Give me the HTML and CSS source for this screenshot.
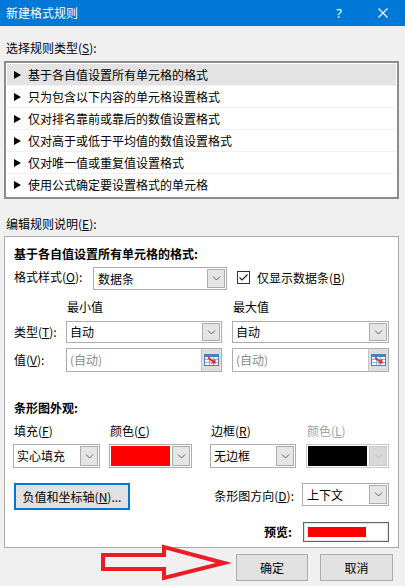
FILE: index.html
```html
<!DOCTYPE html>
<html lang="zh-CN">
<head>
<meta charset="utf-8">
<title>新建格式规则</title>
<link rel="stylesheet" href="styles.css">
</head>
<body>
<div class="dialog">
  <div class="titlebar">
    <span class="title">新建格式规则</span>
    <span class="help">?</span>
    <svg class="close" width="10" height="10" viewBox="0 0 10 10"><path d="M0.5 0.5 L9.5 9.5 M9.5 0.5 L0.5 9.5" stroke="#fff" stroke-width="1.1" fill="none"/></svg>
  </div>
  <div class="content">
    <div class="lbl lbl-type">选择规则类型(<u>S</u>):</div>
    <div class="listbox">
      <div class="row sel"><svg class="tri" width="7" height="8" viewBox="0 0 7 8"><polygon points="0,0 7,4 0,8" fill="#000"/></svg>基于各自值设置所有单元格的格式</div>
      <div class="row"><svg class="tri" width="7" height="8" viewBox="0 0 7 8"><polygon points="0,0 7,4 0,8" fill="#000"/></svg>只为包含以下内容的单元格设置格式</div>
      <div class="row"><svg class="tri" width="7" height="8" viewBox="0 0 7 8"><polygon points="0,0 7,4 0,8" fill="#000"/></svg>仅对排名靠前或靠后的数值设置格式</div>
      <div class="row"><svg class="tri" width="7" height="8" viewBox="0 0 7 8"><polygon points="0,0 7,4 0,8" fill="#000"/></svg>仅对高于或低于平均值的数值设置格式</div>
      <div class="row"><svg class="tri" width="7" height="8" viewBox="0 0 7 8"><polygon points="0,0 7,4 0,8" fill="#000"/></svg>仅对唯一值或重复值设置格式</div>
      <div class="row last"><svg class="tri" width="7" height="8" viewBox="0 0 7 8"><polygon points="0,0 7,4 0,8" fill="#000"/></svg>使用公式确定要设置格式的单元格</div>
    </div>
    <div class="lbl lbl-edit">编辑规则说明(<u>E</u>):</div>
    <div class="panel">
      <div class="bold heading">基于各自值设置所有单元格的格式:</div>
      <div class="fmt-row">
        <span class="fmt-label">格式样式(<u>O</u>):</span>
        <div class="combo fmt">
          <span class="v">数据条</span>
          <span class="dd"><svg width="9" height="5" viewBox="0 0 9 5"><polyline points="1,0.5 4.5,4 8,0.5" fill="none" stroke="#606060" stroke-width="1"/></svg></span>
        </div>
        <span class="checkbox"><svg width="11" height="11" viewBox="0 0 11 11"><polyline points="1.5,5.5 4,8 9.5,2.5" fill="none" stroke="#222" stroke-width="1.2"/></svg></span>
        <span class="check-label">仅显示数据条(<u>B</u>)</span>
      </div>
      <div class="grid3 mm-row">
        <span></span>
        <span class="mm">最小值</span>
        <span class="mm">最大值</span>
      </div>
      <div class="grid3 type-row">
        <span class="rlabel">类型(<u>T</u>):</span>
        <div class="combo w156">
          <span class="v">自动</span>
          <span class="dd"><svg width="9" height="5" viewBox="0 0 9 5"><polyline points="1,0.5 4.5,4 8,0.5" fill="none" stroke="#606060" stroke-width="1"/></svg></span>
        </div>
        <div class="combo w157">
          <span class="v">自动</span>
          <span class="dd"><svg width="9" height="5" viewBox="0 0 9 5"><polyline points="1,0.5 4.5,4 8,0.5" fill="none" stroke="#606060" stroke-width="1"/></svg></span>
        </div>
      </div>
      <div class="grid3 val-row">
        <span class="rlabel">值(<u>V</u>):</span>
        <div class="input w156">
          <span class="v ph">(自动)</span>
          <span class="ref"><svg width="15" height="12" viewBox="0 0 15 12"><rect x="0.5" y="0.5" width="14" height="11" fill="#fff" stroke="#4a7fc0"/><rect x="1" y="1" width="13" height="2" fill="#4a7fc0"/><path d="M1 5.5 H14 M1 8.5 H14 M5.5 3 V11 M9.5 3 V11" stroke="#8fb2de" stroke-width="1"/><path d="M4 3.5 L9 7.5" stroke="#e0302a" stroke-width="2"/><polygon points="7,9.5 12,9.5 11,4.5" fill="#e0302a"/></svg></span>
        </div>
        <div class="input w157">
          <span class="v ph">(自动)</span>
          <span class="ref"><svg width="15" height="12" viewBox="0 0 15 12"><rect x="0.5" y="0.5" width="14" height="11" fill="#fff" stroke="#4a7fc0"/><rect x="1" y="1" width="13" height="2" fill="#4a7fc0"/><path d="M1 5.5 H14 M1 8.5 H14 M5.5 3 V11 M9.5 3 V11" stroke="#8fb2de" stroke-width="1"/><path d="M4 3.5 L9 7.5" stroke="#e0302a" stroke-width="2"/><polygon points="7,9.5 12,9.5 11,4.5" fill="#e0302a"/></svg></span>
        </div>
      </div>
      <div class="bold appear-head">条形图外观:</div>
      <div class="grid4 ap-labels">
        <span>填充(<u>F</u>)</span>
        <span>颜色(<u>C</u>)</span>
        <span>边框(<u>R</u>)</span>
        <span class="disabled">颜色(<u>L</u>)</span>
      </div>
      <div class="grid4 ap-combos">
        <div class="combo w87">
          <span class="v">实心填充</span>
          <span class="dd"><svg width="9" height="5" viewBox="0 0 9 5"><polyline points="1,0.5 4.5,4 8,0.5" fill="none" stroke="#606060" stroke-width="1"/></svg></span>
        </div>
        <div class="combo w83">
          <span class="swatch red"></span>
          <span class="dd"><svg width="9" height="5" viewBox="0 0 9 5"><polyline points="1,0.5 4.5,4 8,0.5" fill="none" stroke="#606060" stroke-width="1"/></svg></span>
        </div>
        <div class="combo w86">
          <span class="v">无边框</span>
          <span class="dd"><svg width="9" height="5" viewBox="0 0 9 5"><polyline points="1,0.5 4.5,4 8,0.5" fill="none" stroke="#606060" stroke-width="1"/></svg></span>
        </div>
        <div class="combo w83 dis">
          <span class="swatch black"></span>
          <span class="dd"><svg width="9" height="5" viewBox="0 0 9 5"><polyline points="1,0.5 4.5,4 8,0.5" fill="none" stroke="#b5b5b5" stroke-width="1"/></svg></span>
        </div>
      </div>
      <div class="btn-row">
        <span class="btn focus">负值和坐标轴(<u>N</u>)...</span>
        <span class="dir-label">条形图方向(<u>D</u>):</span>
        <div class="combo w87 dir">
          <span class="v">上下文</span>
          <span class="dd"><svg width="9" height="5" viewBox="0 0 9 5"><polyline points="1,0.5 4.5,4 8,0.5" fill="none" stroke="#606060" stroke-width="1"/></svg></span>
        </div>
      </div>
      <div class="preview-row">
        <span class="bold">预览:</span>
        <span class="preview"><span class="bar"></span></span>
      </div>
    </div>
    <div class="actions">
      <span class="btn ok">确定</span>
      <span class="btn cancel">取消</span>
    </div>
  </div>
  <svg class="arrow" width="134" height="44" viewBox="0 0 134 44"><polygon points="5,14 66,14 66,6 126,22 66,37 66,28 5,28" fill="none" stroke="#ed1c24" stroke-width="4" stroke-linejoin="miter"/></svg>
</div>
</body>
</html>
```

FILE: styles.css
```css
body {
  margin: 0;
  font-family: "Noto Sans CJK SC", "Noto Sans", sans-serif;
  font-size: 12px;
  line-height: 16px;
  color: #000;
  background: #f0f0f0;
}
u { text-decoration: underline; text-underline-offset: 1px; }

.dialog {
  position: relative;
  width: 405px;
  height: 586px;
  overflow: hidden;
  background: #f0f0f0;
}

.titlebar {
  height: 26px;
  background: #0078d7;
  color: #fff;
  display: flex;
  align-items: center;
  padding-left: 6px;
}
.title { flex: 1; }
.help {
  font-family: "Noto Sans", sans-serif;
  font-size: 13px;
  margin-right: 36px;
}
.close { margin-right: 17px; }

.content { padding: 0 6px 0 4px; }

.lbl { padding-left: 2px; }
.lbl-type { margin-top: 14px; }
.lbl-edit { margin-top: 17px; }

.listbox {
  margin-top: 5px;
  border: 2px solid #8c8c8c;
  background: #fff;
  padding: 1px;
}
.row {
  height: 22px;
  box-sizing: border-box;
  display: flex;
  align-items: center;
  padding-left: 7px;
  border-bottom: 1px solid #f0f0f0;
}
.row.last { border-bottom: none; }
.row.sel { background: #e3e3e3; }
.tri { margin-right: 7px; }

.panel {
  margin-top: 4px;
  height: 312px;
  box-sizing: border-box;
  border: 1px solid #a9a9a9;
  background: #fff;
  padding: 9px 9px 0 9px;
}
.bold { font-weight: bold; }

.fmt-row {
  margin-top: 5px;
  height: 23px;
  display: flex;
  align-items: center;
}
.fmt-label { width: 79px; margin-top: -4px; }
.checkbox {
  margin-left: 10px;
  width: 13px;
  height: 13px;
  box-sizing: border-box;
  border: 1px solid #333;
  display: flex;
  align-items: center;
  justify-content: center;
  margin-top: -2px;
}
.check-label { margin-left: 7px; margin-top: -2px; }

.combo, .input {
  display: flex;
  box-sizing: border-box;
  border: 1px solid #adadad;
  background: #fff;
}
.combo .v, .input .v {
  flex: 1;
  display: flex;
  align-items: center;
  padding-left: 3px;
  white-space: nowrap;
  overflow: hidden;
}
.combo .dd {
  width: 18px;
  margin: 1px;
  box-sizing: border-box;
  border: 1px solid #adadad;
  background: #e5e5e5;
  display: flex;
  align-items: center;
  justify-content: center;
}
.combo.fmt { width: 134px; height: 23px; }
.combo.fmt .v { padding-left: 4px; }

.grid3 {
  display: grid;
  grid-template-columns: 52px 166px 157px;
  align-items: center;
}
.mm-row { margin-top: 9px; }
.mm { padding-left: 1px; }
.type-row { margin-top: 6px; height: 22px; }
.type-row .combo { height: 22px; }
.val-row { margin-top: 5px; height: 24px; }
.val-row .input { height: 24px; }
.w156 { width: 156px; }
.w157 { width: 157px; }
.w87 { width: 87px; }
.w86 { width: 86px; }
.w83 { width: 83px; }
.ph { color: #8a8a8a; }
.input .ref {
  width: 19px;
  background: #dedede;
  border-left: 1px solid #c4c4c4;
  display: flex;
  align-items: center;
  justify-content: center;
}

.appear-head { margin-top: 28px; }
.grid4 {
  display: grid;
  grid-template-columns: 96px 101px 96px 83px;
  margin-left: -1px;
}
.ap-labels { margin-top: 7px; }
.ap-labels span { padding-left: 1px; }
.disabled { color: #a0a0a0; }
.ap-combos { margin-top: 5px; }
.ap-combos .combo { height: 24px; }
.swatch { flex: 1; margin: 1px; }
.swatch.red { background: #ff0000; }
.swatch.black { background: #000; }
.combo.dis { border-color: #c8c8c8; }
.combo.dis .dd { background: #d8d8d8; border-color: #cacaca; }

.btn-row {
  margin-top: 15px;
  display: flex;
  align-items: flex-start;
}
.btn {
  box-sizing: border-box;
  background: #e1e1e1;
  border: 1px solid #adadad;
  display: flex;
  align-items: center;
  justify-content: center;
}
.btn.focus {
  width: 116px;
  height: 27px;
  border: 2px solid #0078d7;
}
.dir-label { margin-left: auto; margin-right: 8px; margin-top: 5px; }
.combo.dir { height: 23px; }
.combo.dir .v { padding-left: 4px; }

.preview-row {
  margin-top: 12px;
  display: flex;
  justify-content: flex-end;
  align-items: center;
}
.preview-row .bold { margin-right: 11px; }
.preview {
  width: 86px;
  height: 20px;
  box-sizing: border-box;
  border: 1px solid #646464;
  box-shadow: inset 0 0 0 1px #e3e3e3;
  background: #fff;
  padding: 4px;
}
.bar {
  display: block;
  width: 58px;
  height: 10px;
  background: #ff0000;
}

.actions {
  margin-top: 6px;
  display: flex;
  justify-content: flex-end;
  gap: 12px;
  padding-right: 6px;
}
.btn.ok { width: 72px; height: 27px; }
.btn.cancel { width: 73px; height: 27px; }

.arrow {
  position: absolute;
  left: 98px;
  top: 541px;
}
```
